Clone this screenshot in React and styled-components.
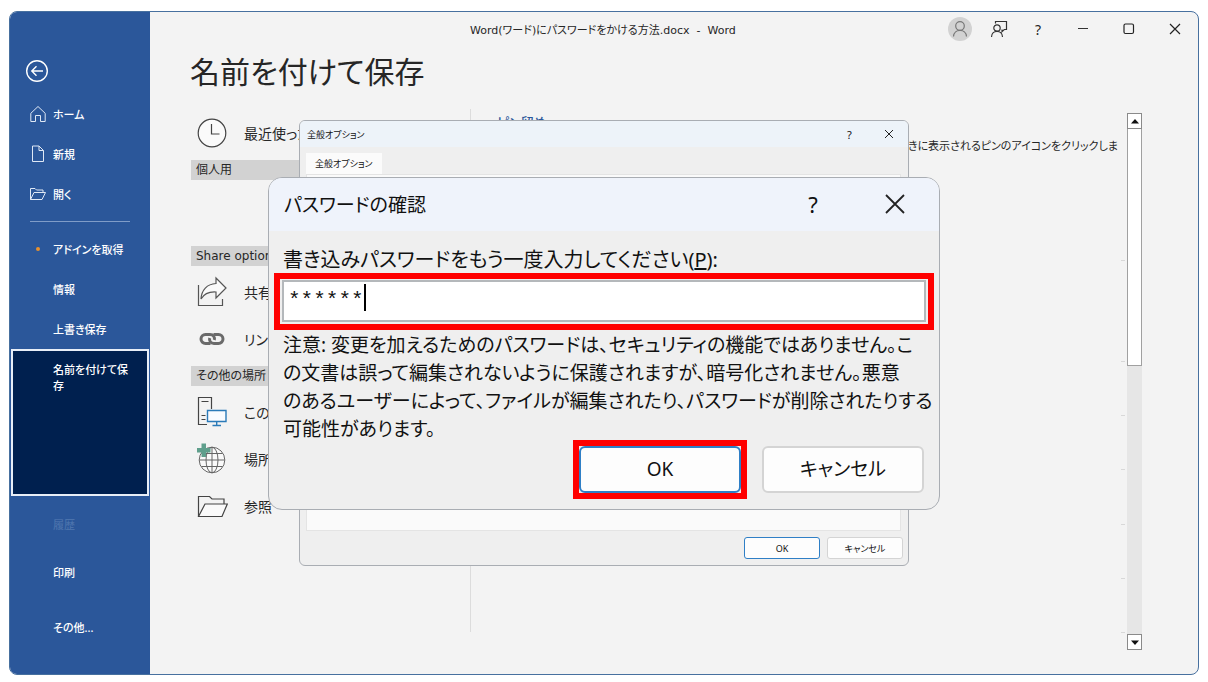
import React, { useState } from "react";
import styled, { createGlobalStyle, css } from "styled-components";

const GlobalStyle = createGlobalStyle`
  * {
    box-sizing: border-box;
  }
  body {
    margin: 0;
    background: #ffffff;
    color: #262626;
    font-family: "Noto Sans", "Noto Sans CJK JP", sans-serif;
    font-feature-settings: "palt";
    font-size: 12px;
  }
  button,
  input {
    font: inherit;
    font-feature-settings: inherit;
    color: inherit;
  }
  h1, h2, p {
    margin: 0;
    font-weight: 400;
  }
`;

const Page = styled.div`
  display: flex;
  min-height: 100vh;
  padding: 11px 9px 7px;
`;

const Window = styled.div`
  position: relative;
  display: flex;
  flex: 1;
  overflow: hidden;
  border: 1px solid #47709f;
  border-radius: 8px;
  background: #f3f3f3;
`;

const Sidebar = styled.nav`
  display: flex;
  flex-direction: column;
  flex: none;
  width: 140px;
  padding-top: 39px;
  background: #2b579a;
  color: #ffffff;
`;

const BackButton = styled.button`
  display: flex;
  align-items: center;
  height: 40px;
  margin-bottom: 3px;
  padding: 0 0 0 15px;
  border: 0;
  background: none;
`;

const NavLink = styled.a`
  display: grid;
  grid-template-columns: 16px 1fr;
  align-items: center;
  gap: 7px;
  min-height: ${({ $height }) => $height || 40}px;
  padding: 0 14px 0 20px;
  color: ${({ $dim }) => ($dim ? "#4a72ac" : "#ffffff")};
  font-size: 11px;
  font-weight: 500;
  line-height: 16px;
  text-decoration: none;
  ${({ $active }) =>
    $active &&
    css`
      align-items: start;
      margin: 0 1px;
      padding: 9px 14px 0 17px;
      border: 2px solid #e8eef7;
      background: #00204f;
    `}
`;

const NavLabel = styled.span`
  padding-top: 2px;
`;

const NavDivider = styled.hr`
  width: 100px;
  margin: 7px 20px;
  border: 0;
  border-top: 1px solid #7f9cc8;
`;

const Dot = styled.span`
  justify-self: center;
  width: 4px;
  height: 4px;
  border-radius: 50%;
  background: #e8912d;
`;

const Main = styled.main`
  display: flex;
  flex-direction: column;
  flex: 1;
  min-width: 0;
`;

const TitleBar = styled.header`
  display: grid;
  grid-template-columns: 1fr auto;
  align-items: center;
  height: 34px;
`;

const FileName = styled.p`
  padding-left: 320px;
  font-family: "DejaVu Sans", "Noto Sans CJK JP", sans-serif;
  font-size: 11px;
  white-space: pre;
`;

const TitleButtons = styled.div`
  display: flex;
  align-items: center;
`;

const BarButton = styled.button`
  display: flex;
  align-items: center;
  justify-content: center;
  width: ${({ $width }) => $width || 40}px;
  height: 24px;
  padding: 0;
  border: 0;
  background: none;
  font-size: ${({ $size }) => $size || 14}px;
`;

const PageTitle = styled.h1`
  padding-left: 40px;
  font-size: 30px;
  line-height: 52px;
`;

const Columns = styled.div`
  display: flex;
  flex: 1;
  padding: 11px 56px 24px 41px;
`;

const Places = styled.section`
  width: 280px;
  flex: none;
  border-right: 1px solid #dcdcdc;
  margin-bottom: 18px;
`;

const GroupTitle = styled.h2`
  height: 20px;
  margin: 4px 0 2px;
  padding-left: 5px;
  background: #d2d2d2;
  font-family: "DejaVu Sans", "Noto Sans CJK JP", sans-serif;
  font-size: 12px;
  line-height: 20px;
`;

const EmptyGroup = styled.div`
  height: 60px;
`;

const Place = styled.button`
  display: grid;
  grid-template-columns: 32px 1fr;
  align-items: center;
  gap: 16px;
  width: 100%;
  height: 47px;
  padding: 0 0 0 5px;
  border: 0;
  background: none;
  font-size: 14px;
  text-align: left;
`;

const Recent = styled.section`
  display: flex;
  flex-direction: column;
  flex: 1;
  min-width: 0;
  padding: 2px 2px 0 26px;
`;

const PinnedTitle = styled.h2`
  margin-bottom: 3px;
  color: #2b579a;
  font-size: 13px;
  font-weight: 500;
  line-height: 22px;
`;

const PinnedHint = styled.p`
  display: flex;
  justify-content: flex-end;
  margin-right: 7px;
  overflow: hidden;
  font-size: 11px;
  line-height: 20px;
  white-space: nowrap;
`;

const RowEnd = styled.div`
  align-self: flex-end;
  width: 4px;
  height: ${({ $height }) => $height}px;
  border-bottom: 1px solid #d8d8d8;
`;

const ScrollBar = styled.div`
  display: flex;
  flex-direction: column;
  flex: none;
  width: 15px;
  margin-top: 4px;
  background: #e6e6e6;
`;

const ScrollButton = styled.button`
  display: flex;
  align-items: center;
  justify-content: center;
  height: 16px;
  padding: 0;
  border: 1px solid #8a8a8a;
  background: #ffffff;
`;

const ScrollThumb = styled.div`
  height: 237px;
  margin-bottom: auto;
  border: 1px solid #a0a0a0;
  border-top: 0;
  background: #ffffff;
`;

const Overlay = styled.div`
  position: absolute;
  inset: 0;
  display: grid;
  place-items: center;
  pointer-events: none;
  > * {
    grid-area: 1 / 1;
    pointer-events: auto;
  }
`;

const DialogFrame = styled.section`
  width: 100%;
  max-width: ${({ $width }) => $width}px;
  overflow: hidden;
  border: 1px solid #a9adb3;
  border-radius: ${({ $radius }) => $radius}px;
  background: #efefef;
  color: #111111;
`;

const DialogBar = styled.header`
  display: flex;
  align-items: center;
  height: ${({ $height }) => $height}px;
  padding: ${({ $pad }) => $pad};
  background: ${({ $color }) => $color};
  font-size: ${({ $size }) => $size}px;
  > h2 {
    flex: 1;
    font-size: inherit;
  }
`;

const OptionsBody = styled.div`
  padding: 6px 5px 6px 6px;
`;

const Tab = styled.button`
  display: block;
  height: 21px;
  padding: 0 9px;
  border: 0;
  background: #fbfbfb;
  font-size: 9px;
`;

const TabPanel = styled.div`
  min-height: 357px;
  margin-right: 2px;
  border: 1px solid #e4e4e4;
  background: #fafafa;
`;

const Buttons = styled.div`
  display: flex;
  align-items: center;
  justify-content: flex-end;
  gap: ${({ $gap }) => $gap}px;
  padding: ${({ $pad }) => $pad};
`;

const PushButton = styled.button`
  width: ${({ $large }) => ($large ? 162 : 76)}px;
  height: ${({ $large }) => ($large ? 47 : 22)}px;
  padding: 0;
  border: ${({ $large }) => ($large ? 2 : 1)}px solid
    ${({ $primary }) => ($primary ? "#2f7fc6" : "#d4d4d4")};
  border-radius: ${({ $large }) => ($large ? 6 : 3)}px;
  background: #fdfdfd;
  font-size: ${({ $large }) => ($large ? 19 : 9)}px;
  line-height: 1;
`;

const Highlight = styled.div`
  padding: ${({ $pad }) => $pad || "0"};
  border: 6px solid #ff0000;
`;

const ConfirmBody = styled.div`
  padding: 16px 5px 10px;
  font-size: 19px;
`;

const FieldLabel = styled.label`
  display: block;
  padding-left: 9px;
  font-size: 20px;
  line-height: 26px;
`;

const PasswordField = styled.div`
  position: relative;
`;

const PasswordInput = styled.input`
  display: block;
  width: 100%;
  height: 42px;
  padding: 0 4px;
  border: 2px solid #b4b8bb;
  outline: 0;
  background: #ffffff;
  font-family: "Liberation Mono", monospace;
  font-size: 21px;
`;

const Caret = styled.span`
  position: absolute;
  top: 4px;
  left: 82px;
  width: 2px;
  height: 27px;
  background: #000000;
`;

const Note = styled.p`
  margin-bottom: -3px;
  padding: 1px 0 0 9px;
  line-height: 28px;
  white-space: nowrap;
`;

const BackIcon = () => (
  <svg width="24" height="24" viewBox="0 0 24 24" fill="none" stroke="#fff" strokeWidth="1.4">
    <circle cx="12" cy="12" r="10.3" />
    <path d="M18 12H7M11.5 7.3 6.8 12l4.7 4.7" />
  </svg>
);

const HomeIcon = () => (
  <svg width="16" height="18" viewBox="0 0 16 18" fill="none" stroke="#dfe8f5">
    <path d="M.8 8.3 8 1.5l7.2 6.8V16.5h-4.7v-6h-5v6H.8z" />
  </svg>
);

const FileIcon = () => (
  <svg width="16" height="18" viewBox="0 0 16 18" fill="none" stroke="#dfe8f5">
    <path d="M2.5 1h6.5l4.5 4.5V16.5h-11zM9 1v4.5h4.5" />
  </svg>
);

const OpenIcon = () => (
  <svg width="16" height="14" viewBox="0 0 16 14" fill="none" stroke="#dfe8f5">
    <path d="M.5 12.5V1.5h4.5l1.5 1.5h6.5v2.5M.5 12.5 4 5.5h11.5l-3.5 7z" />
  </svg>
);

const UserIcon = () => (
  <svg width="24" height="24" viewBox="0 0 24 24" fill="none" stroke="#777" strokeWidth="1.2">
    <circle cx="12" cy="12" r="12" fill="#d2d2d2" stroke="none" />
    <circle cx="12" cy="9" r="4.3" />
    <path d="M5.5 19.5c.3-8.2 12.7-8.2 13 0" />
  </svg>
);

const FeedbackIcon = () => (
  <svg width="18" height="18" viewBox="0 0 18 18" fill="none" stroke="#333" strokeWidth="1.2">
    <circle cx="7" cy="8" r="3.2" />
    <path d="M1.5 17c.2-7.5 10.8-7.5 11 0M5.5 3.5v-2h11v8h-2.2l-2.3 2.2V9.5" />
  </svg>
);

const CloseIcon = ({ size = 12, weight = 1.2 }) => (
  <svg width={size} height={size} viewBox={`0 0 ${size} ${size}`} stroke="#222" strokeWidth={weight}>
    <path d={`M1 1 ${size - 1} ${size - 1}M${size - 1} 1 1 ${size - 1}`} />
  </svg>
);

const MinIcon = () => (
  <svg width="12" height="12" viewBox="0 0 12 12" stroke="#333">
    <path d="M1 5.5h10" />
  </svg>
);

const MaxIcon = () => (
  <svg width="12" height="12" viewBox="0 0 12 12" fill="none" stroke="#222" strokeWidth="1.2">
    <rect x="1" y="1" width="9.5" height="9.5" rx="1.5" />
  </svg>
);

const ClockIcon = () => (
  <svg width="32" height="32" viewBox="0 0 32 32" fill="none" stroke="#444" strokeWidth="1.2">
    <circle cx="16" cy="16" r="13.8" fill="#fafafa" />
    <path d="M15.5 7v10h8" />
  </svg>
);

const ShareIcon = () => (
  <svg width="32" height="32" viewBox="0 0 32 32" fill="none" stroke="#555" strokeWidth="1.2">
    <path d="M2.5 9v20.5h24V23" />
    <path
      d="M20 2l10 10-10 10v-6C13 15.5 8 18 5 23c.5-9 6-15 15-15.5z"
      fill="#fafafa"
    />
  </svg>
);

const LinkIcon = () => (
  <svg width="32" height="32" viewBox="0 0 32 32" fill="none" stroke="#6a6a6a" strokeWidth="3">
    <path d="M14.5 20.5H9.5a4.5 4.5 0 0 1 0-9h4.5c3.5 0 5 2.8 4.3 5.5" />
    <path d="M17.5 11.5H22.5a4.5 4.5 0 0 1 0 9h-4.5c-3.5 0-5-2.8-4.3-5.5" />
  </svg>
);

const PcIcon = () => (
  <svg width="32" height="32" viewBox="0 0 32 32" fill="none" stroke="#444" strokeWidth="1.2">
    <path d="M11 28.5H2.5v-27h13V13M5.5 5.5h7M5.5 19.5h4M5.5 23.5h4" />
    <path
      d="M11.5 14.5h18.5v11H11.5zM20.7 25.5v3.5M16.5 29.5h8.5"
      stroke="#2a7ab8"
      strokeWidth="1.4"
      fill="#f8fbff"
    />
  </svg>
);

const GlobeIcon = () => (
  <svg width="32" height="32" viewBox="0 0 32 32" fill="none" stroke="#666">
    <circle cx="16" cy="17" r="12.8" fill="#fafafa" />
    <ellipse cx="16" cy="17" rx="6" ry="12.8" />
    <path d="M16 4v26M3.5 17h25M5.5 10.5h21M5.5 23.5h21" />
    <path
      d="M5.5 .5h4.5v4.5H14.5v4.5H10V14H5.5V9.5H1V5h4.5z"
      fill="#5f9f8c"
      stroke="none"
    />
  </svg>
);

const FolderIcon = () => (
  <svg width="32" height="32" viewBox="0 0 32 32" fill="none" stroke="#444" strokeWidth="1.2">
    <path d="M2.5 26V6.5h11l2.5 2.5h12v5" />
    <path d="M2.5 26.5l6.5-12.5h22.3l-5.3 12.5z" fill="#fafafa" />
  </svg>
);

const Arrow = ({ down }) => (
  <svg width="8" height="5" viewBox="0 0 8 5" fill="#111">
    <path d={down ? "M0 .5h8L4 5z" : "M0 4.5h8L4 0z"} />
  </svg>
);

const navTop = [
  { label: "ホーム", icon: <HomeIcon /> },
  { label: "新規", icon: <FileIcon /> },
  { label: "開く", icon: <OpenIcon /> },
];

const navRest = [
  { label: "アドインを取得", icon: <Dot /> },
  { label: "情報" },
  { label: "上書き保存" },
  { label: "名前を付けて保存", height: 147, active: true },
  { label: "履歴", height: 56, dim: true },
  { label: "印刷" },
  { label: "その他...", height: 70 },
];

// distances between the row lines of the pinned list
const rowHeights = [105, 101, 54, 54, 55, 54, 54];

const NavItem = ({ item }) => (
  <NavLink href="#" $height={item.height} $active={item.active} $dim={item.dim}>
    {item.icon || <span />}
    <NavLabel>{item.label}</NavLabel>
  </NavLink>
);

const PlaceItem = ({ icon, children }) => (
  <Place>
    {icon}
    <span>{children}</span>
  </Place>
);

const OptionsDialog = () => (
  <DialogFrame $width={610} $radius={6} role="dialog" aria-label="全般オプション">
    <DialogBar $height={26} $size={9} $pad="0 0 0 7px" $color="#edf3f9">
      <h2>全般オプション</h2>
      <BarButton $width={39} $size={11}>?</BarButton>
      <BarButton $width={39} aria-label="閉じる">
        <CloseIcon size={10} weight={1} />
      </BarButton>
    </DialogBar>
    <OptionsBody>
      <Tab>全般オプション</Tab>
      <TabPanel />
      <Buttons $gap={7} $pad="6px 0 0">
        <PushButton $primary>OK</PushButton>
        <PushButton>キャンセル</PushButton>
      </Buttons>
    </OptionsBody>
  </DialogFrame>
);

const ConfirmDialog = () => {
  const [password, setPassword] = useState("******");

  return (
    <DialogFrame $width={672} $radius={14} role="dialog" aria-label="パスワードの確認">
      <DialogBar $height={53} $size={19} $pad="0 3px 0 15px" $color="#eff3fb">
        <h2>パスワードの確認</h2>
        <BarButton $width={82} $size={22}>?</BarButton>
        <BarButton $width={82} aria-label="閉じる">
          <CloseIcon size={20} weight={1.8} />
        </BarButton>
      </DialogBar>
      <ConfirmBody>
        <FieldLabel htmlFor="password">
          書き込みパスワードをもう一度入力してください(<u>P</u>):
        </FieldLabel>
        <Highlight $pad="1px 2px 2px">
          <PasswordField>
            <PasswordInput
              id="password"
              value={password}
              onChange={(e) => setPassword(e.target.value)}
            />
            <Caret />
          </PasswordField>
        </Highlight>
        <Note>
          注意: 変更を加えるためのパスワードは、セキュリティの機能ではありません。こ
          <br />
          の文書は誤って編集されないように保護されますが、暗号化されません。悪意
          <br />
          のあるユーザーによって、ファイルが編集されたり、パスワードが削除されたりする
          <br />
          可能性があります。
        </Note>
        <Buttons $gap={15} $pad="0 10px 0 0">
          <Highlight>
            <PushButton $large $primary>OK</PushButton>
          </Highlight>
          <PushButton $large>キャンセル</PushButton>
        </Buttons>
      </ConfirmBody>
    </DialogFrame>
  );
};

const App = () => {
  return (
    <>
      <GlobalStyle />
      <Page>
        <Window>
          <Sidebar>
            <BackButton aria-label="戻る">
              <BackIcon />
            </BackButton>
            {navTop.map((item) => (
              <NavItem key={item.label} item={item} />
            ))}
            <NavDivider />
            {navRest.map((item) => (
              <NavItem key={item.label} item={item} />
            ))}
          </Sidebar>
          <Main>
            <TitleBar>
              <FileName>Word(ワード)にパスワードをかける方法.docx  -  Word</FileName>
              <TitleButtons>
                <BarButton $width={44} aria-label="アカウント">
                  <UserIcon />
                </BarButton>
                <BarButton $width={34} aria-label="フィードバック">
                  <FeedbackIcon />
                </BarButton>
                <BarButton $width={44}>?</BarButton>
                <BarButton $width={46} aria-label="最小化">
                  <MinIcon />
                </BarButton>
                <BarButton $width={46} aria-label="最大化">
                  <MaxIcon />
                </BarButton>
                <BarButton $width={46} aria-label="閉じる">
                  <CloseIcon />
                </BarButton>
              </TitleButtons>
            </TitleBar>
            <PageTitle>名前を付けて保存</PageTitle>
            <Columns>
              <Places>
                <PlaceItem icon={<ClockIcon />}>最近使ったアイテム</PlaceItem>
                <GroupTitle>個人用</GroupTitle>
                <EmptyGroup />
                <GroupTitle>Share options</GroupTitle>
                <PlaceItem icon={<ShareIcon />}>共有</PlaceItem>
                <PlaceItem icon={<LinkIcon />}>リンクのコピー</PlaceItem>
                <GroupTitle>その他の場所</GroupTitle>
                <PlaceItem icon={<PcIcon />}>この PC</PlaceItem>
                <PlaceItem icon={<GlobeIcon />}>場所の追加</PlaceItem>
                <PlaceItem icon={<FolderIcon />}>参照</PlaceItem>
              </Places>
              <Recent>
                <PinnedTitle>ピン留め</PinnedTitle>
                <PinnedHint>
                  ファイルにマウスを合わせたときに表示されるピンのアイコンをクリックしま
                </PinnedHint>
                {rowHeights.map((height, i) => (
                  <RowEnd key={i} $height={height} />
                ))}
              </Recent>
              <ScrollBar>
                <ScrollButton aria-label="上へ">
                  <Arrow />
                </ScrollButton>
                <ScrollThumb />
                <ScrollButton aria-label="下へ">
                  <Arrow down />
                </ScrollButton>
              </ScrollBar>
            </Columns>
          </Main>
          <Overlay>
            <OptionsDialog />
            <ConfirmDialog />
          </Overlay>
        </Window>
      </Page>
    </>
  );
};

export default App;
